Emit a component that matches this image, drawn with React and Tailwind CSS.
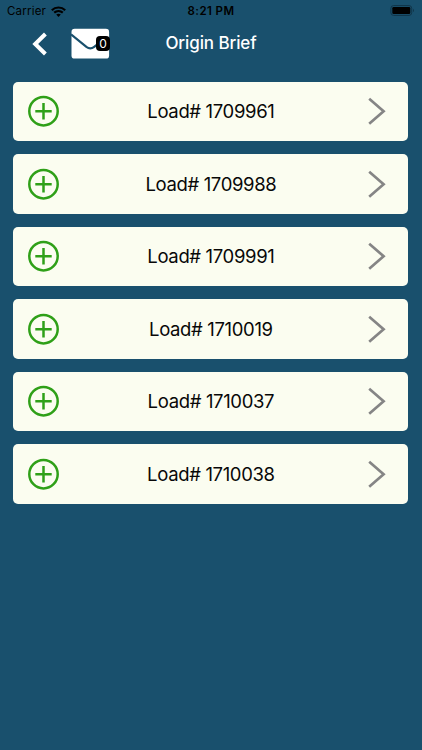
const loads = ['1709961', '1709988', '1709991', '1710019', '1710037', '1710038'];

function StatusBar() {
  return (
    <div className="grid h-[22px] grid-cols-3 items-center pl-[7px] pr-[7px] text-black">
      <div className="flex items-center gap-[5px]">
        <span className="text-[11.5px] leading-[22px] tracking-[0.2px]">Carrier</span>
        <svg width="15" height="11" viewBox="0 0 15 11" fill="none" stroke="currentColor" strokeWidth="2.2">
          <path d="M0.8 4.2C4.5 0.6 10.5 0.6 14.2 4.2" />
          <path d="M3.2 6.7C5.7 4.5 9.3 4.5 11.8 6.7" />
          <path d="M5.2 8.5C6.5 7.4 8.5 7.4 9.8 8.5L7.5 10.9Z" fill="currentColor" stroke="none" />
        </svg>
      </div>
      <span className="text-center text-[11.5px] font-semibold leading-[22px] tracking-[0.4px]">8:21 PM</span>
      <svg className="justify-self-end" width="25" height="12" viewBox="0 0 25 12">
        <rect x="0.9" y="0.6" width="20.8" height="9.8" rx="2.7" fill="none" stroke="#103448" strokeWidth="1" />
        <rect x="2.3" y="2" width="18" height="7" rx="1.3" fill="#000" />
        <path d="M23 3.7v3.4c1.3-.5 1.3-2.9 0-3.4Z" fill="#103448" />
      </svg>
    </div>
  );
}

function Header() {
  return (
    <header className="grid h-[59.5px] grid-cols-3 items-start text-white">
      <div className="flex items-start">
        <svg className="ml-[32px] mt-[10px]" width="16" height="24" viewBox="0 0 16 24" fill="none" stroke="currentColor" strokeWidth="4">
          <path d="M13.4 2L3.2 12L13.4 22" />
        </svg>
        <div className="relative ml-[23px] mt-[6px]">
          <svg width="39" height="31" viewBox="0 0 39 31">
            <rect x="0.5" y="0.8" width="37.6" height="29.8" rx="3.2" fill="#fff" />
            <path d="M0 6.4L15.4 18.8Q19.3 21.8 23.2 18.8L27 15.8" fill="none" stroke="#19506d" strokeWidth="2.2" />
          </svg>
          <span className="absolute left-[25px] top-[8px] flex h-[14.5px] w-[14px] items-center justify-center rounded-[4px] bg-black pt-px text-[12px] leading-none">0</span>
        </div>
      </div>
      <h1 className="mt-[9px] whitespace-nowrap text-center text-[17px] font-medium leading-6 tracking-[-0.1px]">Origin Brief</h1>
    </header>
  );
}

function LoadRow({ number }) {
  return (
    <li className="grid h-[59.5px] grid-cols-[60px_1fr_60px] items-center rounded-[5px] bg-[#fbfdf0]">
      <svg className="ml-[14px]" width="32" height="32" viewBox="0 0 32 32" fill="none" stroke="#2fa018" strokeWidth="2.5">
        <circle cx="16.5" cy="16.2" r="14.2" />
        <path d="M16.5 8v16.4M8.3 16.2h16.4" />
      </svg>
      <span className="whitespace-nowrap text-center text-[18.5px] leading-6 tracking-[-0.35px] text-[#080808]">Load# {number}</span>
      <svg className="ml-[20px]" width="18" height="28" viewBox="0 0 18 28" fill="none" stroke="#858585" strokeWidth="2.7">
        <path d="M1.2 1.7L15.6 14.2L1.2 26.7" />
      </svg>
    </li>
  );
}

export default function App() {
  return (
    <main className="min-h-screen bg-[#19506d] font-[Inter,'Liberation_Sans',sans-serif]">
      <StatusBar />
      <Header />
      <ul className="flex flex-col gap-[13px] pl-[13.4px] pr-[13.6px]">
        {loads.map((number) => (
          <LoadRow key={number} number={number} />
        ))}
      </ul>
    </main>
  );
}
